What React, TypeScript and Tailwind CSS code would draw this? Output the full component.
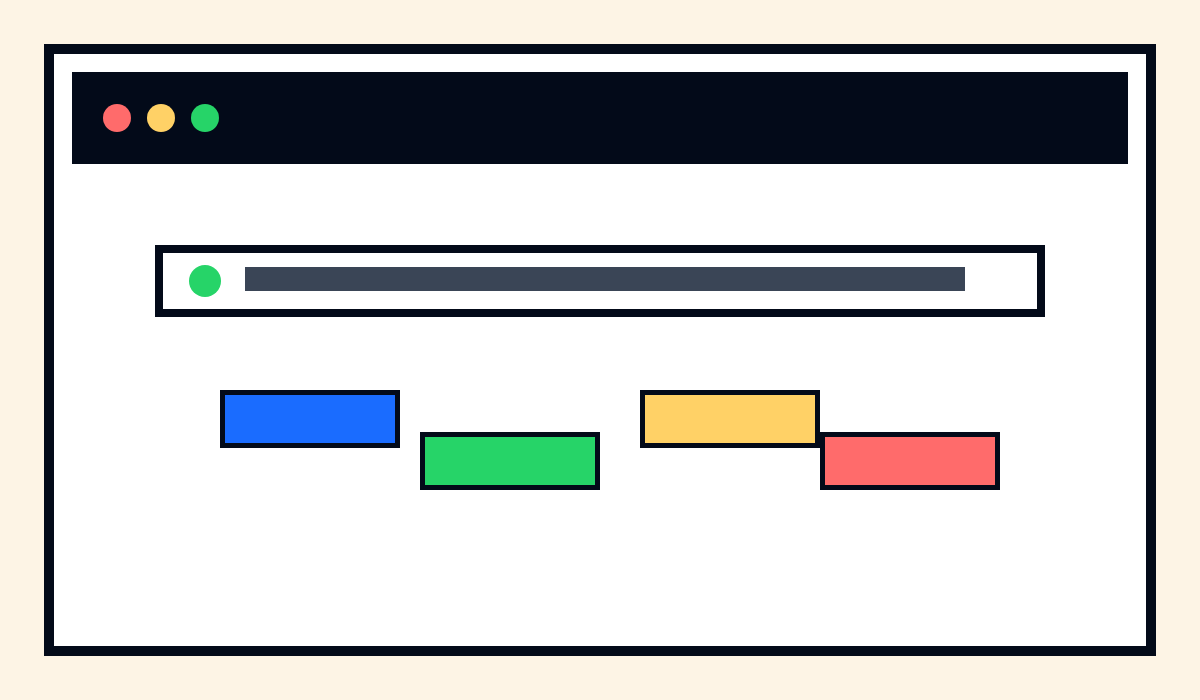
import React from 'react';

const blocks = [
  { color: 'bg-[#1a6cff]', cls: 'ml-[148px]' },
  { color: 'bg-[#26d468]', cls: 'ml-[20px] mt-[42px]' },
  { color: 'bg-[#ffd166]', cls: 'ml-[40px]' },
  { color: 'bg-[#ff6b6b]', cls: 'mt-[42px]' },
];

export default function App() {
  return (
    <div className="w-[1200px] h-[700px] bg-[#fdf4e5] p-[44px]">
      <div className="h-[612px] border-[10px] border-[#030a19] bg-white p-[18px]">
        {/* window header */}
        <div className="h-[92px] bg-[#030a19] flex items-center pl-[31px] gap-4">
          <span className="w-7 h-7 rounded-full bg-[#ff6b6b]" />
          <span className="w-7 h-7 rounded-full bg-[#ffd166]" />
          <span className="w-7 h-7 rounded-full bg-[#26d468]" />
        </div>

        {/* address bar */}
        <div className="mt-[81px] mx-auto w-[890px] h-[72px] border-8 border-[#030a19] flex items-center pl-[26px] gap-6">
          <span className="w-8 h-8 rounded-full bg-[#26d468]" />
          <span className="w-[720px] h-6 mb-1 bg-[#3a4556]" />
        </div>

        {/* blocks */}
        <div className="mt-[73px] flex items-start">
          {blocks.map((b, i) => (
            <div
              key={i}
              className={`w-[180px] h-[58px] border-[5px] border-[#030a19] ${b.color} ${b.cls}`}
            />
          ))}
        </div>
      </div>
    </div>
  );
}
